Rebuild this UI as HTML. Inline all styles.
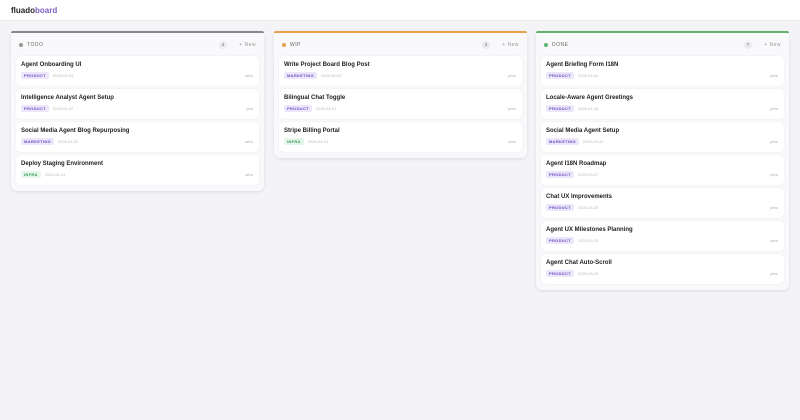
<!DOCTYPE html><html><head><style>
*{box-sizing:border-box;margin:0;padding:0}
body{width:800px;height:420px;background:#f4f4f6;font-family:"Liberation Sans",sans-serif;overflow:hidden;position:relative}
.top{height:21px;background:#fff;border-bottom:1px solid #ececf0;padding:6px 11px;font-size:8px;font-weight:bold;color:#222;line-height:10px}
.top span{color:#7c5cc4}
.col{position:absolute;top:31px;width:253px;background:#f9f9fb;border-radius:6px;box-shadow:0 1px 3px rgba(0,0,0,.1);padding:0 5px 3px}
.bar{height:2px;margin:0 -5px;border-radius:6px 6px 0 0}
.hd{height:23px;display:flex;align-items:center;font-size:5px;color:#666;letter-spacing:.5px;padding:0 3px}
.dot{width:4px;height:4px;border-radius:50%;margin-right:4px}
.hd .c{margin-left:auto;background:#ececef;border-radius:50%;width:8px;height:8px;text-align:center;line-height:8px;font-size:4.5px}
.hd .n{margin-left:12px;color:#999}
.card{background:#fff;border-radius:5px;height:30px;margin-bottom:3px;padding:5px 5px;box-shadow:0 0 2px rgba(0,0,0,.06);position:relative;font-size:4px;line-height:6px}
.t{font-size:6px;line-height:8px;font-weight:bold;color:#222;margin-bottom:3px}
.row{display:flex;align-items:center;height:7px}
.tag{display:inline-block;font-size:4px;line-height:5px;font-weight:bold;padding:1px 3px;border-radius:2px;letter-spacing:.3px}
.p{background:#ece6fb;color:#6b4fbf}.m{background:#ece6fb;color:#6b4fbf}.i{background:#e5f6ea;color:#3a9a57}
.d{font-size:4px;color:#bbb;margin-left:4px}
.a{margin-left:auto;font-size:4px;color:#aaa;margin-right:1px;margin-top:1px}
</style></head><body>
<div class="top">fluado<span>board</span></div>
<div class="col" style="left:11px"><div class="bar" style="background:#888"></div>
<div class="hd"><div class="dot" style="background:#999"></div>TODO<div class="c">4</div><div class="n">+ New</div></div>
<div class="card"><div class="t">Agent Onboarding UI</div><div class="row"><span class="tag p">PRODUCT</span><span class="d">2026-04-03</span><span class="a">a/eo</span></div></div>
<div class="card"><div class="t">Intelligence Analyst Agent Setup</div><div class="row"><span class="tag p">PRODUCT</span><span class="d">2026-04-02</span><span class="a">j/eo</span></div></div>
<div class="card"><div class="t">Social Media Agent Blog Repurposing</div><div class="row"><span class="tag m">MARKETING</span><span class="d">2026-04-02</span><span class="a">a/eo</span></div></div>
<div class="card"><div class="t">Deploy Staging Environment</div><div class="row"><span class="tag i">INFRA</span><span class="d">2026-04-01</span><span class="a">a/eo</span></div></div>
</div>
<div class="col" style="left:274px"><div class="bar" style="background:#e8a04c"></div>
<div class="hd"><div class="dot" style="background:#e8a04c"></div>WIP<div class="c">3</div><div class="n">+ New</div></div>
<div class="card"><div class="t">Write Project Board Blog Post</div><div class="row"><span class="tag m">MARKETING</span><span class="d">2026-04-03</span><span class="a">p/eo</span></div></div>
<div class="card"><div class="t">Bilingual Chat Toggle</div><div class="row"><span class="tag p">PRODUCT</span><span class="d">2026-04-01</span><span class="a">p/eo</span></div></div>
<div class="card"><div class="t">Stripe Billing Portal</div><div class="row"><span class="tag i">INFRA</span><span class="d">2026-04-01</span><span class="a">a/eo</span></div></div>
</div>
<div class="col" style="left:536px"><div class="bar" style="background:#5fb36f"></div>
<div class="hd"><div class="dot" style="background:#5fb36f"></div>DONE<div class="c">7</div><div class="n">+ New</div></div>
<div class="card"><div class="t">Agent Briefing Form I18N</div><div class="row"><span class="tag p">PRODUCT</span><span class="d">2026-04-04</span><span class="a">p/eo</span></div></div>
<div class="card"><div class="t">Locale-Aware Agent Greetings</div><div class="row"><span class="tag p">PRODUCT</span><span class="d">2026-04-28</span><span class="a">p/eo</span></div></div>
<div class="card"><div class="t">Social Media Agent Setup</div><div class="row"><span class="tag m">MARKETING</span><span class="d">2026-03-31</span><span class="a">p/eo</span></div></div>
<div class="card"><div class="t">Agent I18N Roadmap</div><div class="row"><span class="tag p">PRODUCT</span><span class="d">2026-03-27</span><span class="a">p/eo</span></div></div>
<div class="card"><div class="t">Chat UX Improvements</div><div class="row"><span class="tag p">PRODUCT</span><span class="d">2026-03-26</span><span class="a">p/eo</span></div></div>
<div class="card"><div class="t">Agent UX Milestones Planning</div><div class="row"><span class="tag p">PRODUCT</span><span class="d">2026-03-25</span><span class="a">a/eo</span></div></div>
<div class="card"><div class="t">Agent Chat Auto-Scroll</div><div class="row"><span class="tag p">PRODUCT</span><span class="d">2026-03-24</span><span class="a">p/eo</span></div></div>
</div>
</body></html>
